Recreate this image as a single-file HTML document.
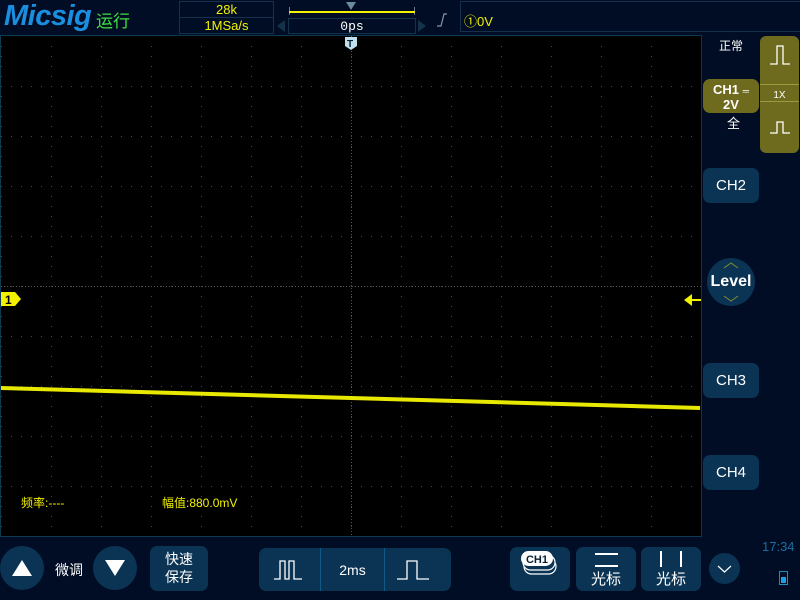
<!DOCTYPE html>
<html><head><meta charset="utf-8"><style>
*{margin:0;padding:0;box-sizing:border-box}
body{width:800px;height:600px;background:#010d24;position:relative;overflow:hidden;font-family:"Liberation Sans","Noto Sans CJK SC",sans-serif;color:#fff}
.a{position:absolute}
.btn{position:absolute;background:#0a3354;border-radius:7px;color:#fff;text-align:center}
.yl{color:#f2f200}
</style></head><body>
<!-- top bar -->
<div class="a" style="left:4px;top:0px;font:italic bold 29px 'Liberation Sans',sans-serif;color:#1a8ee0;letter-spacing:-0.5px">Micsig</div>
<div class="a" style="left:96px;top:7px;font-size:17px;color:#3fe03f">运行</div>
<div class="a" style="left:179px;top:1px;width:95px;height:33px;border:1px solid #15324c"></div>
<div class="a" style="left:179px;top:17px;width:95px;height:1px;background:#15324c"></div>
<div class="a yl" style="left:179px;top:2px;width:95px;text-align:center;font-size:13px">28k</div>
<div class="a yl" style="left:179px;top:18px;width:95px;text-align:center;font-size:13px">1MSa/s</div>
<div class="a" style="left:289px;top:7px;width:126px;height:8px;border:1px solid #6a7a8a;border-top:none;border-bottom:none"></div>
<div class="a" style="left:289px;top:11px;width:126px;height:2px;background:#f2f200"></div>
<div class="a" style="left:346px;top:2px;width:0;height:0;border-left:5px solid transparent;border-right:5px solid transparent;border-top:8px solid #6a8aa0"></div>
<div class="a" style="left:288px;top:18px;width:128px;height:16px;border:1px solid #15324c;text-align:center;font:13px 'Liberation Mono',monospace;line-height:15px">0ps</div>
<div class="a" style="left:277px;top:20px;border-top:6px solid transparent;border-bottom:6px solid transparent;border-right:8px solid #15324c"></div>
<div class="a" style="left:418px;top:20px;border-top:6px solid transparent;border-bottom:6px solid transparent;border-left:8px solid #15324c"></div>
<svg class="a" style="left:436px;top:13px" width="12" height="14"><path d="M1 13 L5 13 L8 1 L11 1" stroke="#8a96a4" stroke-width="1.2" fill="none"/></svg>
<div class="a yl" style="left:460px;top:1px;width:345px;height:31px;border:1px solid #15324c;font-size:13px;padding:9px 0 0 3px">①0V</div>

<!-- screen -->
<div class="a" style="left:0;top:35px;width:702px;height:502px;background:#000;border:1px solid #0d3a50;border-right-color:#14304a"></div>
<svg class="a" style="left:0;top:0" width="702" height="540">
<defs>
<pattern id="vd" x="51" y="36" width="50" height="10" patternUnits="userSpaceOnUse"><rect x="0" y="0" width="1" height="1" fill="#4a4a4a"/></pattern>
<pattern id="hd" x="1" y="36" width="10" height="50" patternUnits="userSpaceOnUse"><rect x="0" y="0" width="1" height="1" fill="#4a4a4a"/></pattern>
</defs>
<rect x="1" y="40" width="700" height="496" fill="url(#vd)"/>
<rect x="1" y="86" width="700" height="401" fill="url(#hd)"/>
<line x1="1" y1="286.5" x2="701" y2="286.5" stroke="#555" stroke-dasharray="1 2"/>
<line x1="351.5" y1="36" x2="351.5" y2="536" stroke="#555" stroke-dasharray="1 2"/>
<polygon points="1,386 700,406 700,410 1,390" fill="#e8e800"/>
<path d="M1,292 H15 L21,299 L15,306 H1Z" fill="#f2f200"/>
<text x="5" y="304" font-family="Liberation Sans" font-weight="bold" font-size="12" fill="#000">1</text>
<path d="M684,300 L692,294 L692,299 H701 V301 H692 L692,306Z" fill="#f2f200"/>
<path d="M345,37 H357 V46 L351,50 L345,46Z" fill="#bfe0ec"/>
<text x="347" y="47" font-family="Liberation Sans" font-weight="bold" font-size="10" fill="#0a2030">T</text>
</svg>
<div class="a yl" style="left:21px;top:494px;font-size:12px">频率:----</div>
<div class="a yl" style="left:162px;top:494px;font-size:12px">幅值:880.0mV</div>

<!-- right panel -->
<div class="a" style="left:719px;top:37px;font-size:12px">正常</div>
<div class="btn" style="left:703px;top:79px;width:56px;height:34px;background:#6e6b1e;font-weight:bold;font-size:13px;line-height:14px;padding-top:4px">CH1 <span style="font-size:9px">═</span><br>2V</div>
<div class="a" style="left:727px;top:113px;font-size:13px">全</div>
<div class="btn" style="left:760px;top:36px;width:39px;height:117px;background:#6e6b1e;border-radius:6px">
<svg width="39" height="117"><path d="M10 28 H17 V10 H23 V28 H30" stroke="#fff" stroke-width="1.3" fill="none"/><line x1="0" y1="48.5" x2="39" y2="48.5" stroke="#9a9a40"/><line x1="0" y1="65.5" x2="39" y2="65.5" stroke="#9a9a40"/><text x="19.5" y="62" text-anchor="middle" font-family="Liberation Sans" font-size="10" fill="#fff">1X</text><path d="M10 97 H17 V86 H23 V97 H30" stroke="#fff" stroke-width="1.3" fill="none"/></svg></div>
<div class="btn" style="left:703px;top:168px;width:56px;height:35px;font-size:15px;line-height:35px">CH2</div>
<div class="a" style="left:707px;top:258px;width:48px;height:48px;border-radius:50%;background:#0a3354;text-align:center;font-weight:bold;font-size:16px;line-height:48px">Level
<svg class="a" style="left:0;top:0" width="48" height="48"><path d="M17 10 L24 5 L31 10 M17 38 L24 43 L31 38" stroke="#8a8a30" fill="none"/></svg></div>
<div class="btn" style="left:703px;top:363px;width:56px;height:35px;font-size:15px;line-height:35px">CH3</div>
<div class="btn" style="left:703px;top:455px;width:56px;height:35px;font-size:15px;line-height:35px">CH4</div>

<!-- bottom -->
<div class="a" style="left:0;top:546px;width:44px;height:44px;border-radius:50%;background:#0a3354"><div class="a" style="left:12px;top:14px;border-left:10px solid transparent;border-right:10px solid transparent;border-bottom:16px solid #fff"></div></div>
<div class="a" style="left:55px;top:560px;font-size:14px">微调</div>
<div class="a" style="left:93px;top:546px;width:44px;height:44px;border-radius:50%;background:#0a3354"><div class="a" style="left:12px;top:14px;border-left:10px solid transparent;border-right:10px solid transparent;border-top:16px solid #fff"></div></div>
<div class="btn" style="left:150px;top:546px;width:58px;height:45px;font-size:14px;line-height:18px;padding-top:4px">快速<br>保存</div>
<div class="btn" style="left:259px;top:548px;width:192px;height:43px"></div>
<div class="a" style="left:320px;top:548px;width:1px;height:43px;background:#0e5a86"></div>
<div class="a" style="left:384px;top:548px;width:1px;height:43px;background:#0e5a86"></div>
<svg class="a" style="left:272px;top:557px" width="36" height="26"><path d="M2 22 H8 V4 H13 V22 H17 V4 H22 V22 H30" stroke="#fff" stroke-width="1.3" fill="none"/></svg>
<div class="a" style="left:321px;top:562px;width:63px;text-align:center;font-size:14px">2ms</div>
<svg class="a" style="left:395px;top:557px" width="40" height="26"><path d="M2 22 H12 V4 H22 V22 H34" stroke="#fff" stroke-width="1.3" fill="none"/></svg>
<div class="btn" style="left:510px;top:547px;width:60px;height:44px">
<svg width="60" height="44"><rect x="14" y="12" width="32" height="15" rx="7.5" fill="#0a3354" stroke="#fff" stroke-width="1.2"/><rect x="13" y="8" width="32" height="15" rx="7.5" fill="#0a3354" stroke="#fff" stroke-width="1.2"/><rect x="11" y="4" width="32" height="15" rx="7.5" fill="#fff"/><text x="27" y="16" text-anchor="middle" font-family="Liberation Sans" font-weight="bold" font-size="11" fill="#0a2030">CH1</text></svg></div>
<div class="btn" style="left:576px;top:547px;width:60px;height:44px"><div class="a" style="left:19px;top:6px;width:23px;height:2px;background:#fff"></div><div class="a" style="left:19px;top:18px;width:23px;height:2px;background:#fff"></div><div class="a" style="left:0;top:21px;width:60px;font-size:15px">光标</div></div>
<div class="btn" style="left:641px;top:547px;width:60px;height:44px"><div class="a" style="left:19px;top:4px;width:2px;height:16px;background:#fff"></div><div class="a" style="left:39px;top:4px;width:2px;height:16px;background:#fff"></div><div class="a" style="left:0;top:21px;width:60px;font-size:15px">光标</div></div>
<div class="a" style="left:709px;top:553px;width:31px;height:31px;border-radius:50%;background:#0a3354"><svg width="31" height="31"><path d="M9 13 L15.5 19 L22 13" stroke="#fff" stroke-width="1.2" fill="none"/></svg></div>
<div class="a" style="left:762px;top:539px;font-size:13px;color:#1a6ea0">17:34</div>
<div class="a" style="left:779px;top:571px;width:9px;height:14px;border:1px solid #1a8ec0"><div class="a" style="left:1px;top:5px;width:5px;height:6px;background:#1aa0e0"></div></div>
</body></html>
